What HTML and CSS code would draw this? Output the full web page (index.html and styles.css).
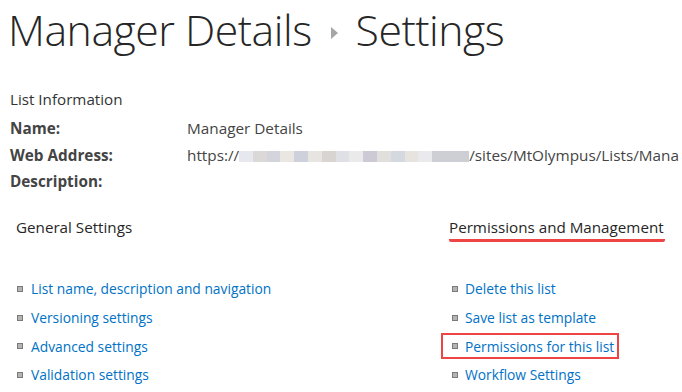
FILE: index.html
```html
<!DOCTYPE html>
<html>
<head>
<meta charset="utf-8">
<link rel="stylesheet" href="styles.css">
</head>
<body>
<div class="page">
  <h1 class="title">Manager Details<span class="crumb-arrow"></span>Settings</h1>
  <div class="section-title">List Information</div>
  <div class="info">
    <div class="label">Name:</div><div class="value">Manager Details</div>
    <div class="label">Web Address:</div><div class="value">https://<span class="blur"></span>/sites/MtOlympus/Lists/Mana</div>
    <div class="label">Description:</div><div class="value"></div>
  </div>
  <div class="columns">
    <div class="col col-left">
      <div class="col-head">General Settings</div>
      <ul class="links">
        <li><a>List name, description and navigation</a></li>
        <li><a>Versioning settings</a></li>
        <li><a>Advanced settings</a></li>
        <li><a>Validation settings</a></li>
      </ul>
    </div>
    <div class="col col-right">
      <div class="col-head"><span class="underlined">Permissions and Management</span></div>
      <ul class="links">
        <li><a>Delete this list</a></li>
        <li><a>Save list as template</a></li>
        <li class="boxed"><a>Permissions for this list</a></li>
        <li><a>Workflow Settings</a></li>
      </ul>
    </div>
  </div>
</div>
</body>
</html>
```
FILE: styles.css
```css
html, body {
  margin: 0;
  padding: 0;
  background: #ffffff;
  overflow: hidden;
}
body {
  width: 682px;
  height: 392px;
  font-family: "Open Sans", "Noto Sans", sans-serif;
  color: #444444;
}
.title {
  margin: 0;
  padding: 2px 0 0 8px;
  font-family: "Open Sans", sans-serif;
  font-weight: 300;
  font-size: 42.8px;
  line-height: 56px;
  color: #262626;
  white-space: nowrap;
  letter-spacing: -0.5px;
}
.crumb-arrow {
  display: inline-block;
  width: 0;
  height: 0;
  border-top: 6px solid transparent;
  border-bottom: 6px solid transparent;
  border-left: 7px solid #a6a6a6;
  vertical-align: middle;
  margin: 0 18px 0 19px;
  position: relative;
  top: -2px;
}
.section-title {
  margin-top: 31px;
  padding-left: 10px;
  font-size: 15.2px;
  line-height: 20px;
  color: #333333;
}
.info {
  display: grid;
  grid-template-columns: 177px 1fr;
  grid-auto-rows: 26.5px;
  padding-left: 10px;
  margin-top: 9px;
  font-size: 15.3px;
  line-height: 20px;
}
.label {
  font-weight: 700;
  color: #444444;
}
.value {
  color: #444444;
  white-space: nowrap;
}
.blur {
  display: inline-block;
  width: 230px;
  height: 11px;
  vertical-align: -1px;
  background:
    linear-gradient(90deg, #e4e6ec 0 6%, #d8d4d4 6% 12%, #cfcfd8 12% 18%, #e8e4e0 18% 24%, #c8ccd8 24% 30%, #e6e2de 30% 36%, #d4d0cc 36% 42%, #dcdce4 42% 48%, #e8e8e8 48% 54%, #c8c4d0 54% 60%, #dedcd8 60% 66%, #d0d4dc 66% 72%, #e4e0dc 72% 78%, #e8e8ec 78% 84%, #c8c8d0 84% 100%);
  opacity: 0.9;
}
.columns {
  display: flex;
  margin-top: 19px;
}
.col-left {
  width: 434px;
  padding-left: 16px;
}
.col-head {
  font-size: 15.2px;
  line-height: 20px;
  height: 26px;
  color: #262626;
}
.underlined {
  display: inline-block;
  border-bottom: 3px solid #ef4444;
  border-radius: 2px;
  padding: 0 1px 2px 0;
  margin-left: -1px;
}
.links {
  list-style: none;
  margin: 32px 0 0 0;
  padding: 0;
}
.links li {
  display: flex;
  align-items: center;
  height: 28.7px;
  font-size: 13.8px;
}
.links li::before {
  content: "";
  width: 4px;
  height: 4px;
  border: 1px solid #7a7a7a;
  background: #b4b4b4;
  margin: 0 8px 0 1px;
  flex: none;
}
.links a {
  color: #0072c6;
  white-space: nowrap;
}
.col-right .links li::before {
  margin-left: 2px;
  margin-right: 7px;
}
.links li.boxed {
  outline: 2px solid #ef4444;
  margin-left: -7px;
  padding-left: 7px;
  width: 167px;
  height: 22px;
  margin-top: 3.35px;
  margin-bottom: 3.35px;
}
```
